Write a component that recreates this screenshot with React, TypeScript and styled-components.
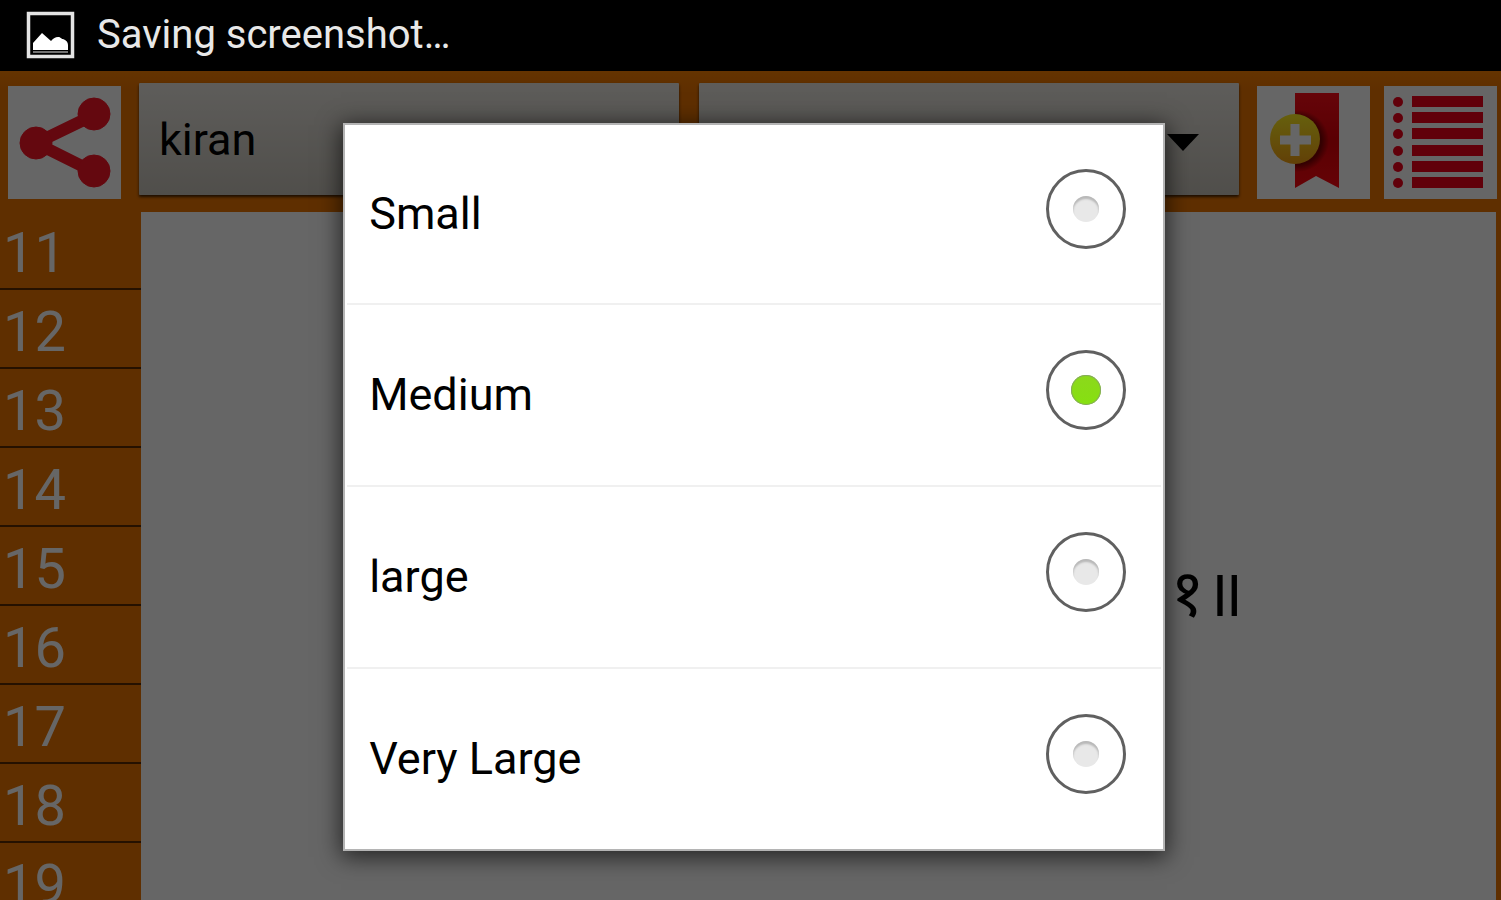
import React, { useState } from "react";
import styled, { createGlobalStyle } from "styled-components";

const GlobalStyle = createGlobalStyle`
  *, *::before, *::after { box-sizing: border-box; }
  body {
    margin: 0;
    background: #ed7500;
    font-family: Roboto, "Noto Sans", sans-serif;
  }
`;

const Screen = styled.div`
  display: flex;
  flex-direction: column;
  height: 100vh;
  overflow: hidden;
`;

const StatusBar = styled.header`
  display: flex;
  align-items: center;
  gap: 22px;
  flex: none;
  height: 71px;
  padding: 0 26px 2px;
  background: #000;
  color: #e8e8e8;
  font-size: 40px;
  line-height: 44px;
`;

const Stage = styled.div`
  position: relative;
  display: flex;
  flex-direction: column;
  flex: 1;
  min-height: 0;
  background: #ed7500;
`;

const Toolbar = styled.div`
  display: flex;
  align-items: center;
  flex: none;
  gap: 18px;
  height: 140px;
  padding: 3px 4px 0 8px;
  background: linear-gradient(#fa8000, #ed7500 20px);
`;

const IconGroup = styled.div`
  display: flex;
  gap: 14px;
`;

const IconButton = styled.button`
  flex: none;
  width: 113px;
  height: 113px;
  padding: 0;
  border: 0;
  background: #fff;

  svg {
    display: block;
    width: 100%;
    height: 100%;
  }
`;

const Spinners = styled.div`
  display: flex;
  flex: 1;
  gap: 20px;
  min-width: 0;
  padding-bottom: 8px;
`;

const SpinnerBox = styled.div`
  display: flex;
  flex: 1;
  min-width: 0;
  position: relative;
`;

const Spinner = styled.select`
  appearance: none;
  width: 100%;
  height: 112px;
  padding: 2px 80px 0 20px;
  border: 0;
  border-radius: 1px;
  background: linear-gradient(#ebe8e2, #c8c4bb);
  box-shadow: 0 2px 3px rgba(0, 0, 0, 0.7);
  color: #000;
  font-family: inherit;
  font-size: 45px;
  line-height: 52px;
  opacity: 1;
`;

const Caret = styled.svg`
  position: absolute;
  right: 40px;
  top: 51px;
  width: 32px;
  height: 17px;
  pointer-events: none;
`;

const Main = styled.div`
  display: flex;
  flex: 1;
  min-height: 0;
  padding-right: 5px;
`;

const PageList = styled.nav`
  flex: none;
  width: 141px;
  overflow: hidden;
`;

const PageLink = styled.a`
  display: block;
  height: 79px;
  padding: 7px 0 0 3px;
  border-bottom: 2px solid #5e2c00;
  color: #fff;
  font-size: 56px;
  line-height: 70px;
  text-decoration: none;
`;

const Reader = styled.main`
  display: flex;
  flex: 1;
  align-items: center;
  justify-content: flex-end;
  min-width: 0;
  margin-top: 1px;
  padding: 76px 252px 0 0;
  background: #fff;
`;

const Verse = styled.p`
  margin: 0;
  color: #000;
  font-size: 66px;
  line-height: 80px;
`;

const Scrim = styled.div`
  position: absolute;
  inset: 0;
  display: flex;
  align-items: center;
  justify-content: center;
  padding: 3px 0 0 7px;
  background: rgba(0, 0, 0, 0.6);
`;

const Dialog = styled.div`
  width: 55%;
  border: 2px solid #b4b4b4;
  background: #fff;
  box-shadow: 0 4px 22px 2px rgba(0, 0, 0, 0.65);
`;

const Choice = styled.label`
  display: flex;
  align-items: center;
  justify-content: space-between;
  height: 182px;
  margin: 0 2px;
  padding: 0 35px 0 22px;
  border-bottom: 2px solid #f0f0f0;
  color: #000;
  font-size: 45px;
  line-height: 52px;

  &:first-child { height: 180px; }
  &:last-child { height: 180px; border-bottom: 0; }
`;

const Radio = styled.input`
  appearance: none;
  display: grid;
  place-items: center;
  flex: none;
  width: 80px;
  height: 80px;
  margin: 0 0 10px;
  border: 3px solid #606060;
  border-radius: 50%;

  &::before {
    content: "";
    width: 26px;
    height: 26px;
    border-radius: 50%;
    background: #e8e8e8;
    box-shadow: inset 0 3px 2px #b8b8b8;
  }

  &:checked::before {
    width: 30px;
    height: 30px;
    background: linear-gradient(#8cd81c, #86e010);
    box-shadow: inset 0 0 0 1px #86a860;
  }
`;

const PictureIcon = () => (
  <svg width="49" height="48" viewBox="0 0 49 48" aria-hidden="true">
    <rect x="2.5" y="2.5" width="44" height="43" fill="none" stroke="#e4e4e4" strokeWidth="3.5" />
    <path d="M7 39v-7l9-10 9 8c3-3 4-4 7-4s3 2 5 2c3 1 5 3 5 6v5z" fill="#fff" />
    <path d="M7 41h35" stroke="#999" strokeWidth="1.5" />
  </svg>
);

const ShareIcon = () => (
  <svg viewBox="0 0 113 113" aria-hidden="true">
    <g fill="#fa1426" stroke="#fa1426">
      <path d="M86 29 28 57l58 29" fill="none" strokeWidth="12" />
      <circle cx="28" cy="57" r="16" />
      <circle cx="86" cy="28" r="16" />
      <circle cx="86" cy="85" r="16" />
    </g>
  </svg>
);

const BookmarkIcon = () => (
  <svg viewBox="0 0 113 113" aria-hidden="true">
    <defs>
      <linearGradient id="ribbon" x1="0" x2="0" y1="0" y2="1">
        <stop offset="0" stopColor="#ff0c18" />
        <stop offset=".5" stopColor="#e00008" />
        <stop offset="1" stopColor="#ff0810" />
      </linearGradient>
      <linearGradient id="coin" x1="0" x2="0" y1="0" y2="1">
        <stop offset="0" stopColor="#fff022" />
        <stop offset="1" stopColor="#f5a012" />
      </linearGradient>
      <radialGradient id="coinShade">
        <stop offset=".75" stopColor="#500" stopOpacity=".7" />
        <stop offset="1" stopColor="#500" stopOpacity="0" />
      </radialGradient>
      <clipPath id="ribbonShape">
        <path d="M38 7h44v95L59 90l-21 12z" />
      </clipPath>
    </defs>
    <path d="M38 7h44v95L59 90l-21 12z" fill="url(#ribbon)" />
    <circle cx="41" cy="55" r="31" fill="url(#coinShade)" clipPath="url(#ribbonShape)" />
    <circle cx="38" cy="53" r="25" fill="url(#coin)" />
    <path d="M38 38v32M23 54h31" stroke="#fff" strokeWidth="9" />
  </svg>
);

const ListIcon = () => (
  <svg viewBox="0 0 113 113" aria-hidden="true">
    {[15, 31, 47, 64, 80, 96].map((y) => (
      <g key={y} fill="#f2001a">
        <circle cx="14" cy={y + 1} r="5" />
        <rect x="28" y={y - 5} width="71" height="11" />
      </g>
    ))}
  </svg>
);

const DropDown = ({ label, options }: { label: string; options: string[] }) => (
  <SpinnerBox>
    <Spinner aria-label={label}>
      {options.map((option) => (
        <option key={option}>{option}</option>
      ))}
    </Spinner>
    <Caret viewBox="0 0 32 17" aria-hidden="true">
      <path d="M0 0h32L16 17z" />
    </Caret>
  </SpinnerBox>
);

const pages = [11, 12, 13, 14, 15, 16, 17, 18, 19];
const sizes = ["Small", "Medium", "large", "Very Large"];

export default function App() {
  const [size, setSize] = useState("Medium");

  return (
    <>
      <GlobalStyle />
      <Screen>
        <StatusBar>
          <PictureIcon />
          <span>Saving screenshot…</span>
        </StatusBar>
        <Stage>
          <Toolbar>
            <IconButton aria-label="Share">
              <ShareIcon />
            </IconButton>
            <Spinners>
              <DropDown label="Font" options={["kiran"]} />
              <DropDown label="Text size" options={[""]} />
            </Spinners>
            <IconGroup>
              <IconButton aria-label="Add bookmark">
                <BookmarkIcon />
              </IconButton>
              <IconButton aria-label="Contents">
                <ListIcon />
              </IconButton>
            </IconGroup>
          </Toolbar>
          <Main>
            <PageList>
              {pages.map((page) => (
                <PageLink key={page} href={`#${page}`}>
                  {page}
                </PageLink>
              ))}
            </PageList>
            <Reader>
              <Verse lang="mr">१॥</Verse>
            </Reader>
          </Main>
          <Scrim>
            <Dialog role="dialog" aria-label="Text size">
              {sizes.map((name) => (
                <Choice key={name}>
                  {name}
                  <Radio
                    type="radio"
                    name="size"
                    checked={size === name}
                    onChange={() => setSize(name)}
                  />
                </Choice>
              ))}
            </Dialog>
          </Scrim>
        </Stage>
      </Screen>
    </>
  );
}
